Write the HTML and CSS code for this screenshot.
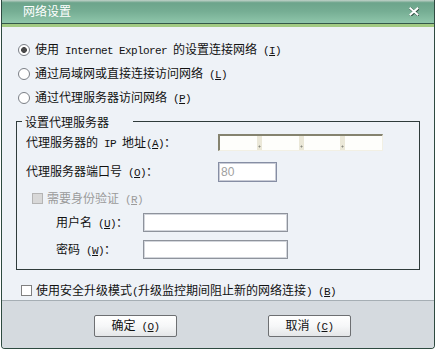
FILE: index.html
```html
<!DOCTYPE html>
<html lang="zh-CN">
<head>
    <meta charset="UTF-8">
    <title>网络设置</title>
    <link rel="stylesheet" href="styles.css">
</head>
<body>
    <div class="window">
        <div class="titlebar">
            <span class="title">网络设置</span>
            <svg class="close" width="10" height="9" viewBox="0 0 10 9">
                <path d="M1.5 1.5 L8.5 7.5 M8.5 1.5 L1.5 7.5" stroke="#2d4a3e" stroke-width="2.6" stroke-linecap="square" transform="translate(0.6 0.6)"/>
                <path d="M1.5 1.5 L8.5 7.5 M8.5 1.5 L1.5 7.5" stroke="#fff" stroke-width="2" stroke-linecap="square"/>
            </svg>
        </div>
        <div class="accent"></div>
        <div class="content">
            <label class="option">
                <input type="radio" name="mode" class="radio" checked>
                <span>使用<span class="latin"> Internet Explorer </span>的设置连接网络<span class="latin"> (<u>I</u>)</span></span>
            </label>
            <label class="option">
                <input type="radio" name="mode" class="radio">
                <span>通过局域网或直接连接访问网络<span class="latin"> (<u>L</u>)</span></span>
            </label>
            <label class="option">
                <input type="radio" name="mode" class="radio">
                <span>通过代理服务器访问网络<span class="latin"> (<u>P</u>)</span></span>
            </label>

            <fieldset class="group">
                <legend>设置代理服务器</legend>
                <div class="row row-ip">
                    <span class="label">代理服务器的<span class="latin"> IP </span>地址<span class="latin">(<u>A</u>)</span>：</span>
                    <div class="ip-box">
                        <span class="ip-part"></span><span class="ip-dot"></span>
                        <span class="ip-part"></span><span class="ip-dot"></span>
                        <span class="ip-part"></span><span class="ip-dot"></span>
                        <span class="ip-part"></span>
                    </div>
                </div>
                <div class="row row-port">
                    <span class="label">代理服务器端口号<span class="latin"> (<u>O</u>)</span>：</span>
                    <input type="text" class="port" value="80" disabled>
                </div>
                <label class="row row-auth">
                    <input type="checkbox" class="check" disabled>
                    <span>需要身份验证<span class="latin"> (<u>R</u>)</span></span>
                </label>
                <div class="row row-user">
                    <span class="label">用户名<span class="latin"> (<u>U</u>)</span>：</span>
                    <input type="text" class="field">
                </div>
                <div class="row row-pass">
                    <span class="label">密码<span class="latin"> (<u>W</u>)</span>：</span>
                    <input type="password" class="field">
                </div>
            </fieldset>

            <label class="option option-safe">
                <input type="checkbox" class="check">
                <span>使用安全升级模式<span class="latin">(</span>升级监控期间阻止新的网络连接<span class="latin">) (<u>B</u>)</span></span>
            </label>
        </div>
        <div class="footer">
            <button class="button">确定<span class="latin"> (<u>O</u>)</span></button>
            <button class="button">取消<span class="latin"> (<u>C</u>)</span></button>
        </div>
    </div>
</body>
</html>
```

FILE: styles.css
```css
body {
    margin: 0;
    background: #fff;
    font-family: "Noto Sans CJK SC", sans-serif;
    font-size: 12px;
    color: #111;
}
.window {
    margin-left: 1px;
    width: 434px;
    height: 349px;
    box-sizing: border-box;
    border: 1px solid #2e4a40;
    border-top: none;
    border-radius: 0 0 4px 4px;
    background: #eef2f7;
    display: flex;
    flex-direction: column;
    overflow: hidden;
}
.titlebar {
    height: 23px;
    display: flex;
    align-items: center;
    justify-content: space-between;
    padding: 0 15px 0 21px;
    background: linear-gradient(180deg, #c3d3cb 0%, #6ca48b 12%, #76ae94 50%, #8fc6ab 100%);
    border-bottom: 1px solid #34574a;
}
.title {
    color: #fff;
    font-size: 12px;
    line-height: 14px;
}
.close {
    display: block;
}
.accent {
    height: 3px;
    background: #a2ca83;
}
.content {
    flex: 1;
    padding: 11px 14px 0 14px;
}
.latin {
    font-family: "Liberation Mono", monospace;
    font-size: 11px;
    letter-spacing: -0.6px;
}
.option {
    display: flex;
    align-items: center;
    height: 24px;
    line-height: 14px;
}
.radio {
    appearance: none;
    margin: 0 5px 0 2px;
    width: 12px;
    height: 12px;
    border: 1px solid #7b7f86;
    border-radius: 50%;
    background: #fff;
    box-sizing: border-box;
}
.radio:checked {
    background: radial-gradient(circle, #4a4a4a 0 2.6px, #fff 3.2px);
}
.group {
    margin: 5px 0 0 0;
    padding: 0 9px 4px 9px;
    border: 1px solid #2f3b3b;
    min-inline-size: 0;
}
.group legend {
    margin-left: -4px;
    padding: 0 24px 0 3px;
    line-height: 14px;
}
.row {
    display: flex;
    align-items: center;
    line-height: 14px;
}
.label {
    flex: none;
}
.row-ip {
    height: 28px;
}
.row-ip .label, .row-port .label {
    width: 192px;
}
.ip-box {
    width: 165px;
    height: 17px;
    box-sizing: border-box;
    border-top: 2px solid #85836f;
    border-left: 2px solid #85836f;
    border-right: 1px solid #f2f0e4;
    border-bottom: 1px solid #f2f0e4;
    background: #fefefb;
    display: flex;
}
.ip-part {
    flex: 1;
}
.ip-dot {
    width: 5px;
    background: radial-gradient(circle at 50% 75%, #8a8a80 0 0.8px, #ebe8d8 1.2px);
}
.row-port {
    height: 30px;
}
.port {
    width: 59px;
    height: 20px;
    box-sizing: border-box;
    margin: 0;
    padding: 0 2px;
    border: 1px solid #868ea4;
    box-shadow: inset 0 0 0 1px #c9ccd6;
    background: #fff;
    color: #a0a0a0;
    font-family: "Liberation Sans", Arial, sans-serif;
    font-size: 12px;
}
.row-auth {
    height: 24px;
    padding-left: 6px;
    color: #9b9b9b;
}
.check {
    appearance: none;
    margin: 0 4px 0 0;
    width: 11px;
    height: 11px;
    box-sizing: border-box;
    border: 1px solid #808080;
    background: #fff;
}
.check:disabled {
    border-color: #b4b4b4;
    background: #d8d8d8;
}
.row-user {
    height: 24px;
    padding-left: 30px;
}
.row-pass {
    height: 30px;
    padding-left: 30px;
}
.row-user .label, .row-pass .label {
    width: 87px;
}
.field {
    width: 145px;
    height: 19px;
    box-sizing: border-box;
    margin: 0;
    border: 1px solid #8e939c;
    box-shadow: inset 0 0 0 1px #d3d6dc;
    background: #fff;
}
.option-safe {
    height: 18px;
    margin-top: 12px;
    padding-left: 5px;
}
.footer {
    height: 49px;
    border-top: 1px solid #a6aeb4;
    background: #d5dadf;
    display: flex;
    gap: 91px;
    padding: 14px 0 0 92px;
    box-sizing: border-box;
    align-items: flex-start;
}
.button {
    width: 83px;
    height: 22px;
    border: 1px solid #6d6f72;
    border-radius: 2px;
    background: linear-gradient(180deg, #ffffff 0%, #f6f7f8 50%, #e4e6e8 100%);
    font-family: "Noto Sans CJK SC", sans-serif;
    font-size: 12px;
    line-height: 14px;
    color: #111;
    padding: 0;
}
```
